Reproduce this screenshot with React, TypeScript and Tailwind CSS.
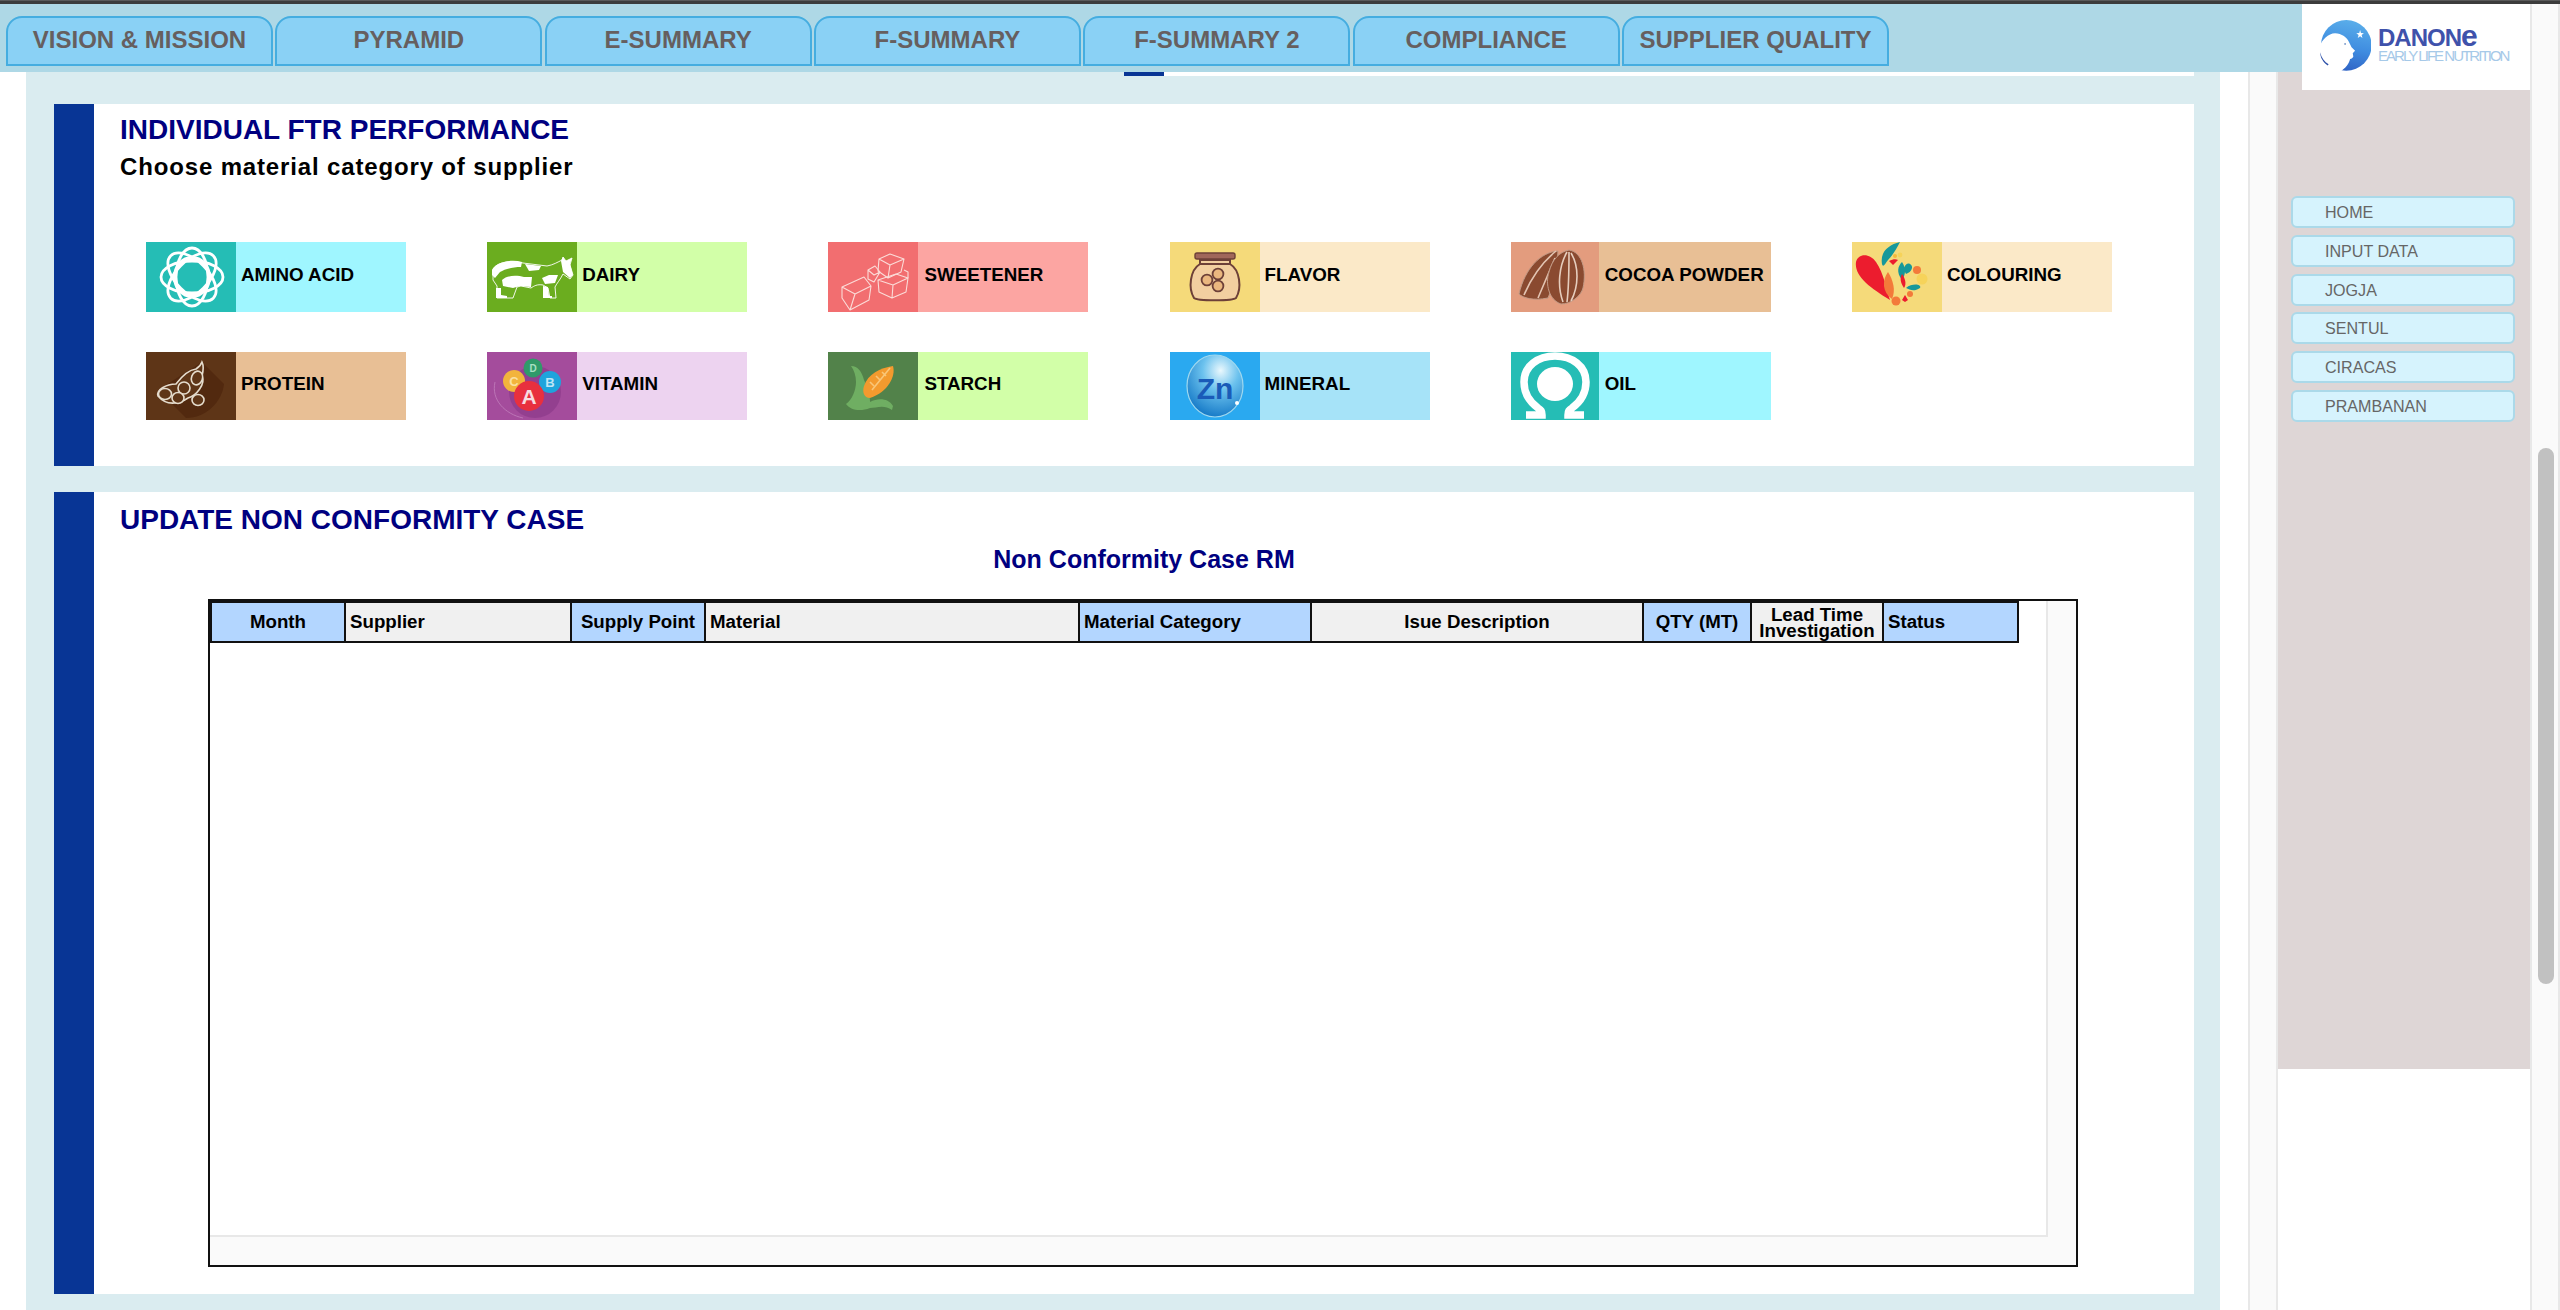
import React from "react";

const Amino = () => (
  <svg viewBox="0 0 90 70" className="w-full h-full block">
    <g fill="none" stroke="#fff" strokeWidth="2.8" transform="translate(46 35)">
      <ellipse rx="31" ry="16" />
      <ellipse rx="31" ry="16" transform="rotate(45) scale(.97 1)" />
      <ellipse rx="29" ry="16" transform="rotate(90)" />
      <ellipse rx="31" ry="16" transform="rotate(135) scale(.97 1)" />
      <ellipse rx="17" ry="19" strokeWidth="4" />
    </g>
  </svg>
);

const Cow = () => (
  <svg viewBox="0 0 90 70" className="w-full h-full block">
    <path fill="none" stroke="#fff" strokeWidth=".9" d="M6 27C10 20 24 18 36 21L60 24C66 23 71 20 75 18L76 15L79 19L85 16L83 23L86 33L83 37L76 32C73 38 70 41 68 45L69 56L63 56L61 46L56 43C50 42 47 44 44 46L34 44L30 45L26 56L10 56L10 44L6 38Z" />
    <path fill="#fff" d="M5 28C9 20 24 17 35 20L34 25C26 25 18 27 13 30L8 36L5 33Z" />
    <path fill="#fff" d="M38 22L54 24L52 28L42 29Z" />
    <path fill="#fff" d="M15 38C20 33 30 33 37 35L45 35L44 45L33 44L26 46L16 44Z" />
    <path fill="#fff" d="M55 36L62 33L71 33L68 41L58 42Z" />
    <path fill="#fff" d="M74 19L76 15L79 19L85 16L83 22L86 33L83 36L76 30Z" />
    <path fill="#fff" d="M9 46L14 46L14 53L20 54L20 56L9 56ZM56 44L61 45L62 54L65 54L65 56L56 56Z" />
  </svg>
);

const Cubes = () => (
  <svg viewBox="0 0 90 70" className="w-full h-full block">
    <g fill="none" stroke="#fbdcd8" strokeWidth="1.1" strokeLinejoin="round">
      <path d="M51 17L62 12L76 17L73 30L60 36L50 29ZM51 17L62 23L76 17M62 23L60 36" />
      <path d="M40 28L47 24L52 30L46 40L40 37ZM40 28L46 33L52 30" />
      <path d="M50 38L68 32L80 36L78 50L64 56L51 50ZM50 38L65 43L80 36M65 43L64 56" />
      <path d="M76 28L80 30L80 36" />
      <path d="M14 45L36 35L43 44L41 58L22 68L14 56ZM14 45L27 52L43 44M27 52L22 68" />
    </g>
  </svg>
);

const Jar = () => (
  <svg viewBox="0 0 90 70" className="w-full h-full block">
    <rect x="25" y="11" width="40" height="6" rx="2" fill="#a0665a" stroke="#6d4038" strokeWidth="1.4" />
    <path d="M30 18H60V22C70 28 72 46 66 56C63 59 27 59 24 56C18 46 20 28 30 22Z" fill="#f2cfa0" stroke="#6d4038" strokeWidth="2" />
    <path d="M30 22H60" stroke="#6d4038" strokeWidth="2" />
    <g fill="#eab77f" stroke="#6d4038" strokeWidth="1.8">
      <circle cx="37" cy="38" r="5.4" />
      <circle cx="48" cy="32" r="5.4" />
      <circle cx="48" cy="44" r="5.4" />
    </g>
  </svg>
);

const Cocoa = () => (
  <svg viewBox="0 0 88 70" className="w-full h-full block">
    <path d="M47 9C30 10 14 26 8 52C12 56 22 59 37 56C44 40 46 24 47 9Z" fill="#8a4a30" stroke="#c29a86" strokeWidth="1" />
    <path d="M45 9C34 18 22 32 13 53M44 16C38 30 32 44 27 56" fill="none" stroke="#e3c4b2" strokeWidth="1.6" />
    <path d="M58 8C71 10 76 28 72 46C70 54 60 62 50 62C38 58 34 42 38 30C41 18 48 10 58 8Z" fill="#8a4a30" stroke="#c29a86" strokeWidth="1" />
    <path d="M56 10C48 24 46 44 52 60M58 10C58 26 58 44 56 60M60 11C68 24 68 44 60 59" fill="none" stroke="#e6cdbd" strokeWidth="1.6" />
  </svg>
);

const Colour = () => (
  <svg viewBox="0 0 90 70" className="w-full h-full block">
    <path d="M38 58C18 46 2 34 4 20C6 11 18 11 24 20C32 32 34 46 38 58Z" fill="#ec1c2e" />
    <path d="M30 22C28 10 36 3 48 0C44 8 40 14 36 18C33 22 31 26 30 22Z" fill="#17989a" />
    <path d="M40 57C30 50 30 38 36 30C41 38 44 48 40 57Z" fill="#f37a3a" />
    <path d="M50 38C44 30 46 24 50 20C54 26 54 32 50 38ZM54 32C50 26 54 20 58 22C62 24 60 30 54 32Z" fill="#17989a" />
    <path d="M46 18L41 23L37 19C41 17 44 17 46 18ZM52 46C48 40 48 36 50 32C53 36 55 42 52 46Z" fill="#ec1c2e" />
    <circle cx="65" cy="28" r="4" fill="#f37a3a" />
    <circle cx="70" cy="37" r="5.5" fill="#f6d35a" />
    <path d="M54 46C60 41 70 42 68 46C62 50 58 48 54 46Z" fill="#17989a" />
    <circle cx="44" cy="59" r="4.5" fill="#f37a3a" />
    <circle cx="58" cy="52" r="3" fill="#f37a3a" />
    <path d="M50 58L53 53L56 58L53 60Z" fill="#ec1c2e" />
    <circle cx="43" cy="14" r="2" fill="#f6b93a" />
    <circle cx="48" cy="13" r="2.4" fill="#f6d35a" />
  </svg>
);

const Soy = () => (
  <svg viewBox="0 0 90 68" className="w-full h-full block">
    <path d="M56 10L78 32C76 50 60 66 40 66L12 38Z" fill="#52290f" />
    <g fill="#5e3517" stroke="#e5dccd" strokeWidth="1.6">
      <path d="M56 10C58 14 57 20 56 24C60 32 50 44 42 46C36 50 22 56 12 44C10 38 20 32 30 32C36 24 42 18 50 17C53 15 55 13 56 10Z" />
      <ellipse cx="51" cy="26" rx="5.5" ry="7" transform="rotate(20 51 26)" />
      <ellipse cx="38" cy="36" rx="6" ry="6" />
      <ellipse cx="19" cy="42" rx="6.5" ry="5.5" />
      <ellipse cx="32" cy="46" rx="6" ry="5.5" />
      <ellipse cx="52" cy="48" rx="6" ry="5.5" />
    </g>
  </svg>
);

const Vit = () => (
  <svg viewBox="0 0 90 68" className="w-full h-full block" fontFamily="'Liberation Sans', sans-serif" fontWeight="700" textAnchor="middle">
    <path d="M8 30C4 48 18 62 36 66" fill="none" stroke="#c27fbc" strokeWidth=".8" />
    <circle cx="48" cy="40" r="26" fill="#8b3a8a" opacity=".7" />
    <circle cx="46" cy="16" r="9.5" fill="#2f9a6a" />
    <text x="46" y="20" fontSize="10" fill="#a8e0c4">D</text>
    <circle cx="27" cy="29" r="11" fill="#f2b43c" />
    <text x="27" y="34" fontSize="13" fill="#fbe0a0">C</text>
    <circle cx="63" cy="30" r="11" fill="#1ea4dc" />
    <text x="63" y="35" fontSize="13" fill="#bfe6f6">B</text>
    <circle cx="42" cy="44" r="15" fill="#e8303e" />
    <text x="42" y="52" fontSize="21" fill="#f7dce0">A</text>
  </svg>
);

const Corn = () => (
  <svg viewBox="0 0 90 68" className="w-full h-full block">
    <path d="M23 14C30 14 34 20 36 28C40 36 42 44 42 50C50 46 60 46 65 54L64 58C56 52 48 56 42 56C32 60 22 58 18 52C24 48 28 38 28 30C28 24 26 18 23 14Z" fill="#6fae62" />
    <path d="M65 14C68 24 60 40 42 46C36 46 34 40 36 34C40 22 52 16 65 14Z" fill="#f39a2e" />
    <path d="M62 16L44 38M54 20L58 24M48 24L52 28M42 30L46 34" stroke="#f9c678" strokeWidth="1.6" fill="none" />
  </svg>
);

const Zn = () => (
  <svg viewBox="0 0 90 68" className="w-full h-full block">
    <defs>
      <radialGradient id="znb" cx=".6" cy=".25" r=".8">
        <stop offset="0" stopColor="#eaf8fd" />
        <stop offset=".4" stopColor="#6cc2ee" />
        <stop offset="1" stopColor="#0f74c4" />
      </radialGradient>
    </defs>
    <ellipse cx="45" cy="34" rx="28" ry="31" fill="url(#znb)" stroke="#9fd8ef" strokeWidth="1.2" />
    <text x="45" y="47" textAnchor="middle" fontFamily="'Liberation Sans', sans-serif" fontWeight="700" fontSize="30" fill="#1a5bb8">Zn</text>
    <circle cx="67" cy="51" r="2" fill="#fff" />
  </svg>
);

const Omega = () => (
  <svg viewBox="0 0 88 68" className="w-full h-full block">
    <path d="M15 63H31C31 59 30 58 27 56C16 48 13 38 13 30C13 14 27 4 44 4C61 4 75 14 75 30C75 38 72 48 61 56C58 58 57 59 57 63H73" fill="none" stroke="#fff" strokeWidth="7.5" />
    <ellipse cx="44" cy="32" rx="18" ry="17" fill="#fff" />
  </svg>
);

const Emblem = () => (
  <svg viewBox="0 0 180 176" className="w-full h-full block">
    <defs>
      <linearGradient id="dn" x1=".6" y1="0" x2=".4" y2="1">
        <stop offset="0" stopColor="#5aaeea" />
        <stop offset=".55" stopColor="#3f8ce0" />
        <stop offset="1" stopColor="#2f62c4" />
      </linearGradient>
    </defs>
    <circle cx="96" cy="86" r="86" fill="url(#dn)" />
    <path d="M0 87L7 87C12 70 35 45 58 45C80 45 100 60 106 76L114 92L126 104L118 113L120 124C118 130 114 132 109 132C106 145 95 165 72 176L0 176Z" fill="#fff" />
    <path d="M7 109C12 128 22 142 36 150L33 154C18 144 8 128 7 109Z" fill="#2a4ea8" />
    <path d="M143 34L146 44L156 45L148 51L151 61L143 55L135 61L138 51L130 45L140 44Z" fill="#fff" />
    <circle cx="92" cy="81" r="3" fill="#6b8fc4" />
  </svg>
);

const items = [
  { t: "AMINO ACID", a: "bg-[#25bdb5]", b: "bg-[#9ff6ff]", I: Amino, w: "w-[90px]", h: "h-[70px]", p: "pl-[5px]" },
  { t: "DAIRY", a: "bg-[#6bad1f]", b: "bg-[#d2ffa8]", I: Cow, w: "w-[90px]", h: "h-[70px]", p: "pl-[5px]" },
  { t: "SWEETENER", a: "bg-[#f26e70]", b: "bg-[#fca5a2]", I: Cubes, w: "w-[90px]", h: "h-[70px]", p: "pl-[6px]" },
  { t: "FLAVOR", a: "bg-[#f5da7a]", b: "bg-[#fbe9c8]", I: Jar, w: "w-[90px]", h: "h-[70px]", p: "pl-[5px]" },
  { t: "COCOA POWDER", a: "bg-[#e39c7e]", b: "bg-[#e8bf95]", I: Cocoa, w: "w-[88px]", h: "h-[70px]", p: "pl-[6px]" },
  { t: "COLOURING", a: "bg-[#f5da7a]", b: "bg-[#fbe9c8]", I: Colour, w: "w-[90px]", h: "h-[70px]", p: "pl-[5px]" },
  { t: "PROTEIN", a: "bg-[#5e3517]", b: "bg-[#e8bf95]", I: Soy, w: "w-[90px]", h: "h-[68px]", p: "pl-[5px]" },
  { t: "VITAMIN", a: "bg-[#a44c9c]", b: "bg-[#edd3f0]", I: Vit, w: "w-[90px]", h: "h-[68px]", p: "pl-[5px]" },
  { t: "STARCH", a: "bg-[#52824a]", b: "bg-[#d2ffa8]", I: Corn, w: "w-[90px]", h: "h-[68px]", p: "pl-[6px]" },
  { t: "MINERAL", a: "bg-[#2aa9f0]", b: "bg-[#a6e3f8]", I: Zn, w: "w-[90px]", h: "h-[68px]", p: "pl-[5px]" },
  { t: "OIL", a: "bg-[#25bdb5]", b: "bg-[#9ff6ff]", I: Omega, w: "w-[88px]", h: "h-[68px]", p: "pl-[6px]" },
];

const tabs = ["VISION & MISSION", "PYRAMID", "E-SUMMARY", "F-SUMMARY", "F-SUMMARY 2", "COMPLIANCE", "SUPPLIER QUALITY"];
const nav = ["HOME", "INPUT DATA", "JOGJA", "SENTUL", "CIRACAS", "PRAMBANAN"];

const cols = [
  { t: "Month", w: "w-[134px]", c: "bg-[#b3d6ff] text-center" },
  { t: "Supplier", w: "w-[226px]", c: "bg-[#f0f0f0] text-left pl-1" },
  { t: "Supply Point", w: "w-[134px]", c: "bg-[#b3d6ff] text-center" },
  { t: "Material", w: "w-[374px]", c: "bg-[#f0f0f0] text-left pl-1" },
  { t: "Material Category", w: "w-[232px]", c: "bg-[#b3d6ff] text-left pl-1" },
  { t: "Isue Description", w: "w-[332px]", c: "bg-[#f0f0f0] text-center" },
  { t: "QTY (MT)", w: "w-[108px]", c: "bg-[#b3d6ff] text-center" },
  { t: "Lead Time Investigation", w: "w-[132px]", c: "bg-[#f0f0f0] text-center leading-[16.5px] pt-[2px]" },
  { t: "Status", w: "w-[135px]", c: "bg-[#b3d6ff] text-left pl-1" },
];

export default function App() {
  return (
    <div className="relative w-[2560px] h-[1310px] overflow-hidden bg-white font-['Liberation_Sans',Arial,sans-serif]">
      <div className="h-[4px] bg-[#3c3c3c] border-t border-[#5a5a5a]" />

      <header className="absolute left-0 top-[4px] z-10 w-[2302px] h-[68px] bg-[#aed8e6] flex gap-[2.33px] pl-[6px] pt-[12px]">
        {tabs.map((t) => (
          <div key={t} className="w-[267px] h-[50px] rounded-t-[16px] border-2 border-[#45ade0] bg-[#8ad1f5] flex items-center justify-center pb-[3px] text-[24px] font-bold text-[#665f5f] whitespace-nowrap">
            {t}
          </div>
        ))}
      </header>

      <div className="absolute left-[2302px] top-[4px] z-10 w-[228px] h-[86px] bg-white flex">
        <div className="w-[53px] h-[52px] ml-[16px] mt-[16px]">
          <Emblem />
        </div>
        <div className="ml-[7px] mt-[22px] flex flex-col">
          <span className="text-[24px] leading-[24px] font-bold tracking-[-1px] text-[#3f52ab]">
            DANON<span className="text-[30px] leading-[20px]">e</span>
          </span>
          <span className="text-[15px] leading-[14px] -mt-[1px] tracking-[-1.95px] text-[#a6c9e8] whitespace-nowrap">EARLY LIFE NUTRITION</span>
        </div>
      </div>

      <div className="flex h-[1306px] pl-[26px]">
        <main className="w-[2194px] h-full bg-[#daecf0]">
          <div className="h-[68px]" />
          <div className="h-[4px] flex">
            <div className="w-[1098px]" />
            <div className="w-[40px] bg-[#083595]" />
            <div className="w-[1030px] bg-white" />
          </div>

          <section className="mt-[28px] ml-[28px] w-[2140px] h-[362px] bg-white flex">
            <div className="w-[40px] bg-[#083595] shrink-0" />
            <div className="pl-[26px] pt-[11px]">
              <h2 className="text-[28px] leading-[30px] font-bold text-[#000080] whitespace-nowrap">INDIVIDUAL FTR PERFORMANCE</h2>
              <p className="mt-[8px] text-[24px] leading-[28px] font-bold text-black whitespace-nowrap tracking-[0.85px]">Choose material category of supplier</p>
              <div className="mt-[61px] ml-[26px] grid grid-cols-[repeat(6,260px)] gap-x-[81.2px] gap-y-[40px]">
                {items.map((it) => (
                  <div key={it.t} className={`flex w-[260px] ${it.h} ${it.b}`}>
                    <div className={`${it.w} ${it.h} ${it.a} shrink-0`}>
                      <it.I />
                    </div>
                    <div className={`${it.p} pb-[3px] flex items-center text-[18.8px] font-bold text-black whitespace-nowrap`}>{it.t}</div>
                  </div>
                ))}
              </div>
            </div>
          </section>

          <section className="mt-[26px] ml-[28px] w-[2140px] h-[802px] bg-white flex">
            <div className="w-[40px] bg-[#083595] shrink-0" />
            <div className="flex-1 flex flex-col">
              <h2 className="pl-[26px] pt-[13px] text-[28px] leading-[30px] font-bold text-[#000080] whitespace-nowrap">UPDATE NON CONFORMITY CASE</h2>
              <h3 className="mt-[10px] text-center text-[25px] leading-[28px] font-bold text-[#000080]">Non Conformity Case RM</h3>
              <div className="mt-[26px] ml-[114px] w-[1870px] h-[668px] border-2 border-[#111] flex flex-col">
                <div className="flex h-[634px]">
                  <div className="flex-1">
                    <table className="table-fixed w-[1809px] border-separate border-spacing-0 border-l-2 border-y-2 border-[#111]">
                      <thead>
                        <tr className="h-[38px]">
                          {cols.map((c) => (
                            <th key={c.t} className={`${c.w} ${c.c} border-r-2 border-[#111] p-0 text-[18.7px] font-bold text-black align-middle`}>
                              {c.t}
                            </th>
                          ))}
                        </tr>
                      </thead>
                    </table>
                  </div>
                  <div className="w-[30px] border-l-2 border-[#e8e8e8] bg-[#fafafa]" />
                </div>
                <div className="h-[30px] bg-[#fafafa]">
                  <div className="h-[2px] w-[1838px] bg-[#e8e8e8]" />
                </div>
              </div>
            </div>
          </section>
        </main>

        <div className="w-[28px]" />
        <div className="w-[30px] h-full border-x-2 border-[#e8e8e8] bg-[#fafafa]" />

        <aside className="w-[252px] h-full">
          <div className="h-[1065px] bg-[#ded6d6] pt-[192px] pl-[13px] flex flex-col gap-[6.8px]">
            {nav.map((n) => (
              <div key={n} className="w-[224px] h-[32px] rounded-[6px] border-2 border-[#abd9e9] bg-[#d6f3fd] pl-[32px] flex items-center text-[16.1px] text-[#666] whitespace-nowrap">
                {n}
              </div>
            ))}
          </div>
        </aside>

        <div className="w-[30px] h-full border-x-2 border-[#e8e8e8] bg-[#fafafa] pt-[444px] pl-[6px]">
          <div className="w-[16px] h-[536px] rounded-[8px] bg-[#c1c1c1]" />
        </div>
      </div>
    </div>
  );
}
